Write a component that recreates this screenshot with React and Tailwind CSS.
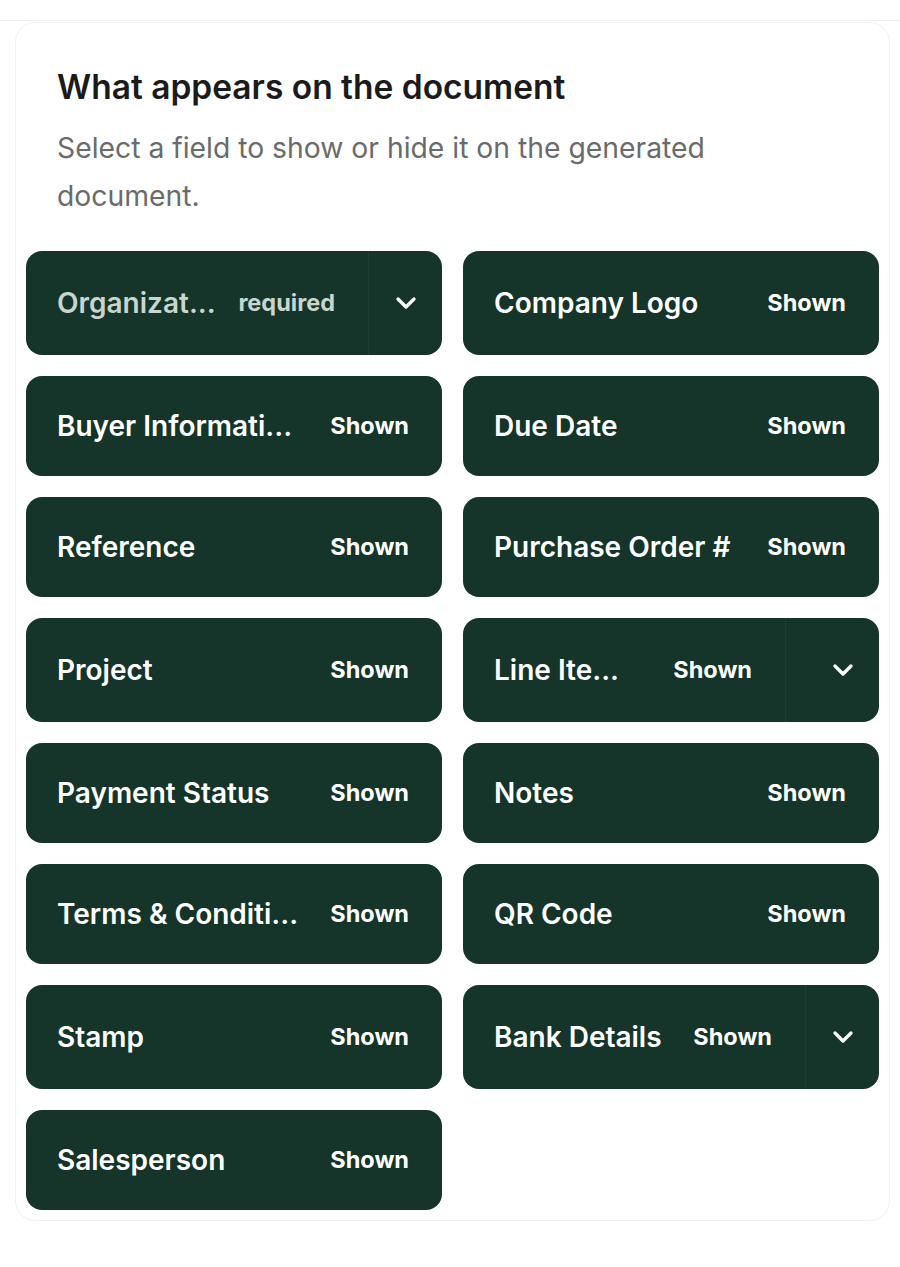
import { ChevronDown } from 'lucide-react';

const fields = [
    { name: 'Organizat...', status: 'required', muted: true, menu: true },
    { name: 'Company Logo', status: 'Shown' },
    { name: 'Buyer Informati...', status: 'Shown' },
    { name: 'Due Date', status: 'Shown' },
    { name: 'Reference', status: 'Shown' },
    { name: 'Purchase Order #', status: 'Shown' },
    { name: 'Project', status: 'Shown' },
    { name: 'Line Ite...', status: 'Shown', menu: true, wide: true },
    { name: 'Payment Status', status: 'Shown' },
    { name: 'Notes', status: 'Shown' },
    { name: 'Terms & Conditi...', status: 'Shown' },
    { name: 'QR Code', status: 'Shown' },
    { name: 'Stamp', status: 'Shown' },
    { name: 'Bank Details', status: 'Shown', menu: true },
    { name: 'Salesperson', status: 'Shown' },
];

function FieldTile({ field }) {
    const textColor = field.muted ? 'text-[#c9d6cf]' : 'text-white';
    return (
        <div className="flex min-h-[100px] rounded-[16px] bg-[#15342a]">
            <button className="flex flex-1 items-center justify-between gap-4 pl-[31px] pr-[33px] text-left">
                <span className={`text-[28px] font-semibold whitespace-nowrap ${textColor}`}>{field.name}</span>
                <span className={`text-[23.5px] font-bold whitespace-nowrap ${textColor}`}>{field.status}</span>
            </button>
            {field.menu && (
                <div
                    className={`flex h-[104px] items-center justify-center border-l border-[#1f3f34] ${
                        field.wide ? 'w-[94px] pl-[20px]' : 'w-[74px]'
                    }`}
                >
                    <ChevronDown className="h-[32px] w-[32px] text-white" strokeWidth={2.5} />
                </div>
            )}
        </div>
    );
}

export default function App() {
    return (
        <div className="min-h-screen bg-white font-['Inter',sans-serif]">
            <div className="h-[21px] border-b border-[#efefef]"></div>

            {/* Settings card */}
            <section className="ml-[15px] mr-[10px] mt-[1px] rounded-[20px] border border-[#f1f1f1] px-[10px] pb-[10px]">
                <div className="px-[31px] pt-[44px] pb-[31px]">
                    <h2 className="text-[33.5px] font-semibold leading-[40px] text-[#1b1b1b]">What appears on the document</h2>
                    <p className="mt-[17px] max-w-[700px] text-[28.3px] leading-[48px] text-[#6b6b6b]">
                        Select a field to show or hide it on the generated document.
                    </p>
                </div>

                <div className="grid grid-cols-2 gap-x-[21px] gap-y-[21px]">
                    {fields.map((field) => (
                        <FieldTile key={field.name} field={field} />
                    ))}
                </div>
            </section>
        </div>
    );
}
